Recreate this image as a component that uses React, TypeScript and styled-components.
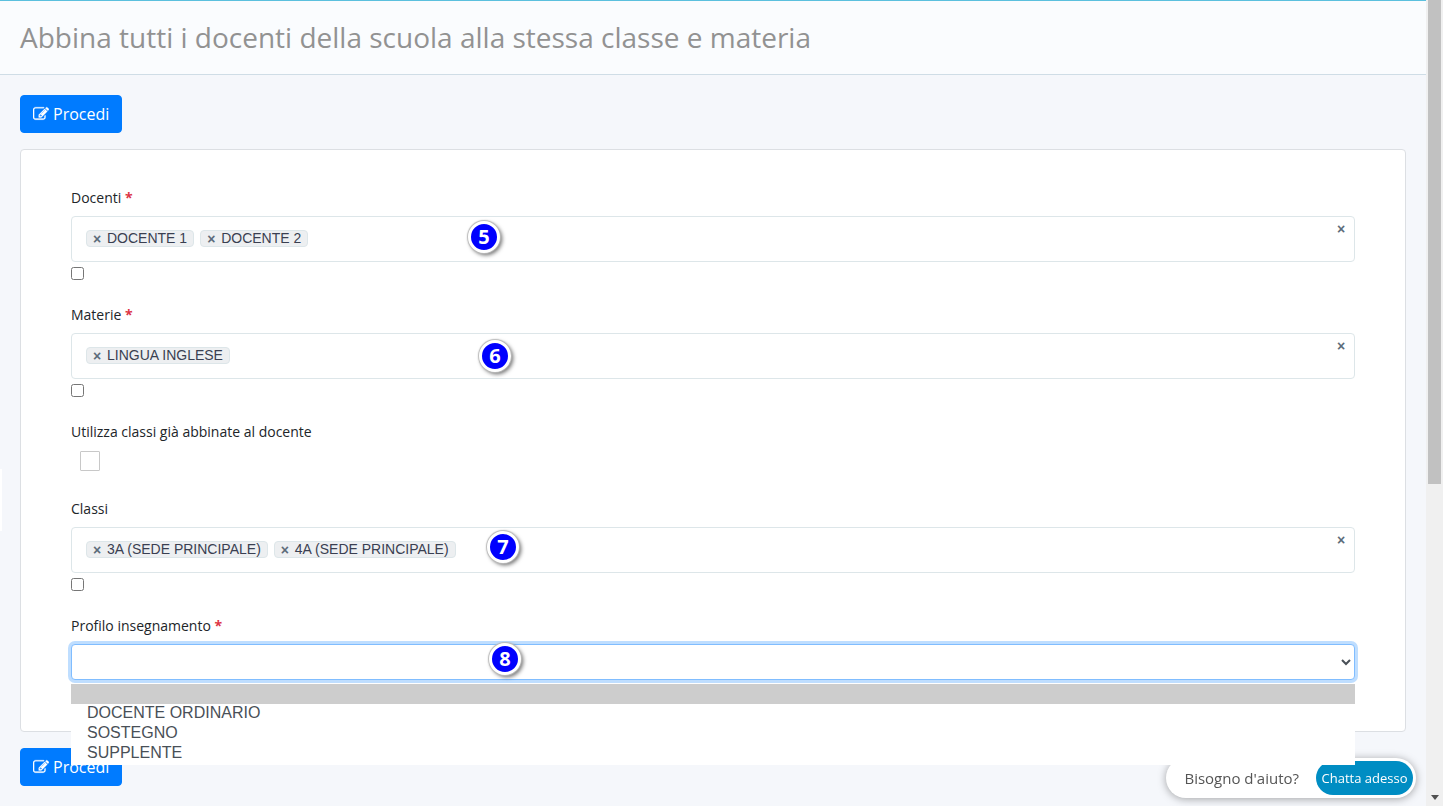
import React from 'react';
import styled, { createGlobalStyle } from 'styled-components';

const GlobalStyle = createGlobalStyle`
  *, *::before, *::after { box-sizing: border-box; }
  body {
    margin: 0;
    background: #f5f7fb;
    color: #343a40;
    font-family: "Open Sans", sans-serif;
    font-size: 14px;
    line-height: 21px;
  }
`;

const arial = '"Liberation Sans", Arial, sans-serif';

const Page = styled.div`
  display: flex;
  min-height: 100vh;
`;

const Main = styled.main`
  flex: 1;
  min-width: 0;
`;

const PageHeader = styled.header`
  height: 75px;
  padding: 0 20px 2px;
  display: flex;
  align-items: center;
  background: #fafcfe;
  border-top: 1px solid #5bc0de;
  border-bottom: 1px solid #cfdde6;
`;

const Title = styled.h1`
  margin: 0;
  font-size: 28px;
  line-height: 40px;
  font-weight: 400;
  color: #929292;
`;

const Content = styled.form`
  padding: 20px;
  display: flex;
  flex-direction: column;
  align-items: flex-start;
  gap: 16px;
`;

const PrimaryButton = styled.button`
  display: flex;
  align-items: center;
  gap: 4px;
  height: 38px;
  padding: 0 12px;
  border: 1px solid #007bff;
  border-radius: 4px;
  background: #007bff;
  color: #fff;
  font: 400 16px/24px "Open Sans", sans-serif;
`;

const Card = styled.section`
  align-self: stretch;
  display: flex;
  flex-direction: column;
  gap: 24px;
  padding: 37px 50px 51px;
  background: #fff;
  border: 1px solid #dcdfe3;
  border-radius: 4px;
`;

const Field = styled.div`
  display: flex;
  flex-direction: column;
  align-items: flex-start;
`;

const Label = styled.label`
  margin-bottom: 8px;
  font-weight: 500;
  color: #212529;
`;

const Required = styled.span`
  color: #dc3545;
  font-weight: 700;
`;

const Control = styled.div`
  position: relative;
  align-self: stretch;
`;

const TagBox = styled.div`
  display: flex;
  align-items: flex-start;
  height: 46px;
  padding: 0 8px 0 14px;
  border: 1px solid #dde6e9;
  border-radius: 4px;
  background: #fff;
`;

const TagList = styled.ul`
  flex: 1;
  display: flex;
  gap: 6px;
  margin: 0;
  padding: 13px 0 0;
  list-style: none;
`;

const Tag = styled.li`
  display: flex;
  align-items: center;
  gap: 6px;
  height: 17px;
  padding: 0 6px;
  border: 1px solid #dde6e9;
  border-radius: 4px;
  background: #edeff1;
  color: #3a3f51;
  font: 14px/15px ${arial};
`;

const RemoveButton = styled.button`
  padding: 0;
  border: 0;
  background: none;
  width: 8px;
  color: #5d6b7a;
  font: 700 14px/14px ${arial};
`;

const ClearButton = styled(RemoveButton)`
  margin-top: 5px;
  margin-right: 1px;
`;

const SelectAll = styled.input`
  width: 13px;
  height: 13px;
  margin: 5px 0 0;
`;

const CheckRow = styled.div`
  display: flex;
  align-items: flex-start;
  height: 24px;
  padding: 1px 0 0 9px;
`;

const SquareCheck = styled.input`
  appearance: none;
  width: 20px;
  height: 20px;
  margin: 0;
  border: 1px solid #c8c8c8;
  border-radius: 1px;
  background: #fff;
`;

const Select = styled.select`
  display: block;
  width: 100%;
  height: 36px;
  padding: 0 12px;
  border: 1px solid #80bdff;
  border-radius: 4px;
  background: #fff;
  color: #495057;
  font: 16px/20px ${arial};
  outline: 0;
  box-shadow: 0 0 0 3px #bfdeff;
`;

const Options = styled.ul`
  position: absolute;
  z-index: 3;
  top: 40px;
  left: 0;
  right: 0;
  margin: 0;
  padding: 0 0 1px;
  list-style: none;
  background: #fff;
`;

const Option = styled.li<{ $active?: boolean }>`
  height: 20px;
  padding: 0 16px;
  background: ${(p) => (p.$active ? '#cdcdcd' : '#fff')};
  color: #495057;
  font: 16px/18px ${arial};
`;

const StepBadge = styled.span<{ $left: number; $top: number }>`
  position: absolute;
  left: ${(p) => p.$left}px;
  top: ${(p) => p.$top}px;
  width: 32px;
  height: 32px;
  display: flex;
  align-items: center;
  justify-content: center;
  border: 3px solid #fff;
  border-radius: 50%;
  background: #0000fe;
  color: #fff;
  font: 700 20px/26px "Noto Sans", sans-serif;
  box-shadow: 0 0 1px 1px #bbb, 2px 2px 4px 0 rgba(0, 0, 0, 0.6);
`;

const SideTab = styled.div`
  position: fixed;
  left: 0;
  top: 469px;
  width: 2px;
  height: 62px;
  background: #fff;
`;

const Chat = styled.aside`
  position: fixed;
  z-index: 2;
  right: 27px;
  bottom: 8px;
  display: flex;
  align-items: center;
  height: 40px;
  padding: 0 3px 0 18px;
  gap: 17px;
  border-radius: 20px;
  background: #fff;
  color: #555;
  font-size: 15px;
  box-shadow: 0 1px 8px rgba(0, 0, 0, 0.35);
`;

const ChatButton = styled.button`
  width: 97px;
  height: 34px;
  padding: 0;
  border: 0;
  border-radius: 17px;
  background: #008dc3;
  color: #fff;
  font: 500 13px/18px "Open Sans", sans-serif;
  white-space: nowrap;
`;

const ScrollTrack = styled.div`
  position: sticky;
  top: 0;
  display: flex;
  flex-direction: column;
  justify-content: space-between;
  align-items: center;
  width: 17px;
  height: 100vh;
  padding-bottom: 6px;
  background: #f0f0f0;
`;

const ScrollThumb = styled.div`
  width: 13px;
  height: 60vh;
  background: #c1c1c1;
`;

const EditIcon = () => (
  <svg width="16" height="16" viewBox="0 0 1792 1792" fill="currentColor" stroke="currentColor" strokeWidth="30" aria-hidden="true">
    <path d="M888 1184l116-116-152-152-116 116v56h96v96h56zm440-720q-16-16-33 1l-350 350q-17 17-1 33t33-1l350-350q17-17 1-33zm80 594v190q0 119-84.5 203.5t-203.5 84.5h-832q-119 0-203.5-84.5t-84.5-203.5v-832q0-119 84.5-203.5t203.5-84.5h832q63 0 117 25 15 7 18 23 3 17-9 29l-49 49q-14 14-32 8-23-6-45-6h-832q-66 0-113 47t-47 113v832q0 66 47 113t113 47h832q66 0 113-47t47-113v-126q0-13 9-22l64-64q15-15 35-7t20 29zm-96-738l288 288-672 672h-288v-288zm444 132l-92 92-288-288 92-92q28-28 68-28t68 28l152 152q28 28 28 68t-28 68z" />
  </svg>
);

const ProceedButton = () => (
  <PrimaryButton type="button">
    <EditIcon />
    Procedi
  </PrimaryButton>
);

interface TagFieldProps {
  id: string;
  label: string;
  required?: boolean;
  tags: string[];
  step: number;
  left: number;
  top: number;
}

const TagField = ({ id, label, required, tags, step, left, top }: TagFieldProps) => (
  <Field>
    <Label htmlFor={id}>
      {label} {required && <Required>*</Required>}
    </Label>
    <Control>
      <TagBox>
        <TagList>
          {tags.map((tag) => (
            <Tag key={tag}>
              <RemoveButton type="button" aria-label={`Rimuovi ${tag}`}>×</RemoveButton>
              {tag}
            </Tag>
          ))}
        </TagList>
        <ClearButton type="button" aria-label="Rimuovi tutti">×</ClearButton>
      </TagBox>
      <StepBadge $left={left} $top={top}>{step}</StepBadge>
    </Control>
    <SelectAll id={id} type="checkbox" />
  </Field>
);

const profiles = ['', 'DOCENTE ORDINARIO', 'SOSTEGNO', 'SUPPLENTE'];

export default function App() {
  return (
    <>
      <GlobalStyle />
      <Page>
        <Main>
          <PageHeader>
            <Title>Abbina tutti i docenti della scuola alla stessa classe e materia</Title>
          </PageHeader>
          <Content>
            <ProceedButton />
            <Card>
              <TagField id="docenti" label="Docenti" required tags={['DOCENTE 1', 'DOCENTE 2']} step={5} left={397} top={5} />
              <TagField id="materie" label="Materie" required tags={['LINGUA INGLESE']} step={6} left={408} top={7} />
              <Field>
                <Label htmlFor="abbinate">Utilizza classi già abbinate al docente</Label>
                <CheckRow>
                  <SquareCheck id="abbinate" type="checkbox" />
                </CheckRow>
              </Field>
              <TagField id="classi" label="Classi" tags={['3A (SEDE PRINCIPALE)', '4A (SEDE PRINCIPALE)']} step={7} left={416} top={4} />
              <Field>
                <Label htmlFor="profilo">
                  Profilo insegnamento <Required>*</Required>
                </Label>
                <Control>
                  <Select id="profilo" defaultValue="">
                    <option value="" />
                  </Select>
                  <StepBadge $left={418} $top={-1}>8</StepBadge>
                  <Options role="listbox" aria-label="Profilo insegnamento">
                    {profiles.map((name) => (
                      <Option key={name} role="option" aria-selected={name === ''} $active={name === ''}>
                        {name}
                      </Option>
                    ))}
                  </Options>
                </Control>
              </Field>
            </Card>
            <ProceedButton />
          </Content>
        </Main>
        <ScrollTrack aria-hidden="true">
          <ScrollThumb />
          <svg width="8" height="5" viewBox="0 0 8 5" fill="#505050">
            <path d="M0 0h8L4 5z" />
          </svg>
        </ScrollTrack>
      </Page>
      <SideTab />
      <Chat>
        Bisogno d'aiuto?
        <ChatButton type="button">Chatta adesso</ChatButton>
      </Chat>
    </>
  );
}
